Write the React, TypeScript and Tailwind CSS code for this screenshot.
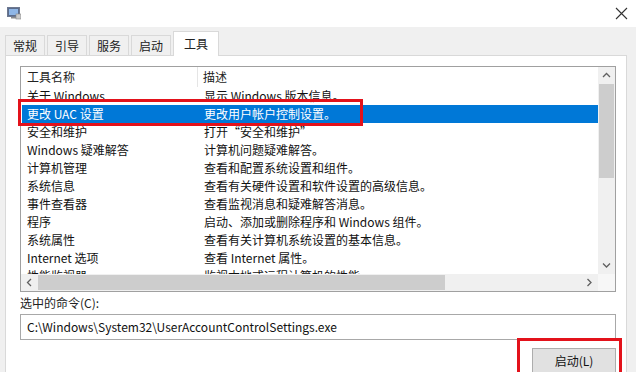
import React from "react";

const rows: [string, string][] = [
  ["关于 Windows", "显示 Windows 版本信息。"],
  ["更改 UAC 设置", "更改用户帐户控制设置。"],
  ["安全和维护", "打开\u201C安全和维护\u201D"],
  ["Windows 疑难解答", "计算机问题疑难解答。"],
  ["计算机管理", "查看和配置系统设置和组件。"],
  ["系统信息", "查看有关硬件设置和软件设置的高级信息。"],
  ["事件查看器", "查看监视消息和疑难解答消息。"],
  ["程序", "启动、添加或删除程序和 Windows 组件。"],
  ["系统属性", "查看有关计算机系统设置的基本信息。"],
  ["Internet 选项", "查看 Internet 属性。"],
  ["性能监视器", "监视本地或远程计算机的性能。"],
];

const Chevron = ({ dir }: { dir: "up" | "down" | "left" | "right" }) => {
  const d =
    dir === "up"
      ? "M1 5 L4.5 1.5 L8 5"
      : dir === "down"
      ? "M1 1.5 L4.5 5 L8 1.5"
      : dir === "left"
      ? "M5 1 L1.5 4.5 L5 8"
      : "M1.5 1 L5 4.5 L1.5 8";
  const w = dir === "up" || dir === "down" ? 9 : 7;
  const h = dir === "up" || dir === "down" ? 7 : 9;
  return (
    <svg width={w} height={h} viewBox={`0 0 ${w} ${h}`}>
      <path d={d} fill="none" stroke="#606060" strokeWidth="1.3" />
    </svg>
  );
};

export default function App() {
  return (
    <div
      className="relative w-[636px] h-[372px] overflow-hidden bg-[#f0f0f0] text-[12px] text-[#111]"
      style={{ fontFamily: '"Noto Sans CJK SC", "Noto Sans", sans-serif' }}
    >
      {/* title bar */}
      <div className="h-[27px] bg-white flex items-center justify-between pl-[7px] pr-[8px]">
        <svg width="14" height="13" viewBox="0 0 14 13">
          <rect x="0.5" y="0.5" width="12" height="9" fill="#5b6c8c" stroke="#6d7890" />
          <rect x="2" y="2" width="9" height="6" fill="#8fb6e6" />
          <rect x="9" y="7" width="5" height="5" fill="#c9c9c9" stroke="#888" strokeWidth="0.6" />
          <rect x="4" y="10" width="5" height="1.5" fill="#8a8a8a" />
        </svg>
        <svg width="13" height="13" viewBox="0 0 13 13">
          <path d="M1 1 L12 12 M12 1 L1 12" stroke="#333" strokeWidth="1.1" />
        </svg>
      </div>

      {/* tabs */}
      <div className="pl-[5px] pr-[9px]">
        <div className="flex items-end h-[28px]">
          {["常规", "引导", "服务", "启动"].map((t) => (
            <div
              key={t}
              className="h-[20px] px-[7px] mr-[2px] flex items-center border-t border-l border-r border-[#d9d9d9] bg-[#f0f0f0] text-[#222]"
            >
              {t}
            </div>
          ))}
          <div className="relative z-10 -mb-px h-[25px] w-[46px] flex items-center justify-center bg-white border-t border-l border-r border-[#d9d9d9] text-[#222]">
            工具
          </div>
        </div>

        {/* panel */}
        <div className="h-[400px] bg-white border border-[#d9d9d9] pl-[14px] pr-[11px] pt-[10px]">
          {/* list view */}
          <div className="w-[596px] h-[226px] border border-[#a0a0a0] flex flex-col">
            <div className="flex h-[207px]">
              <div className="w-[577px] overflow-hidden">
                <div className="flex h-[20px] items-center text-[#222]">
                  <div className="w-[177px] pl-[6px] h-full flex items-center border-r border-[#e5e5e5]">
                    工具名称
                  </div>
                  <div className="pl-[5px]">描述</div>
                </div>
                {rows.map(([a, b], i) => (
                  <div
                    key={a}
                    className={
                      "flex h-[18px] items-center " +
                      (i === 1 ? "bg-[#0078d7] text-white ml-[1px]" : "")
                    }
                  >
                    <div className={i === 1 ? "w-[177px] pl-[5px]" : "w-[178px] pl-[6px]"}>{a}</div>
                    <div className="pl-[5px] whitespace-nowrap">{b}</div>
                  </div>
                ))}
              </div>
              {/* vertical scrollbar */}
              <div className="w-[17px] bg-[#f0f0f0] flex flex-col items-center">
                <div className="h-[17px] flex items-center justify-center">
                  <Chevron dir="up" />
                </div>
                <div className="w-[15px] h-[94px] bg-[#cdcdcd]" />
                <div className="flex-1" />
                <div className="h-[17px] flex items-center justify-center">
                  <Chevron dir="down" />
                </div>
              </div>
            </div>
            {/* horizontal scrollbar */}
            <div className="flex h-[17px]">
              <div className="w-[577px] bg-[#f0f0f0] flex items-center">
                <div className="w-[17px] flex items-center justify-center">
                  <Chevron dir="left" />
                </div>
                <div className="w-[407px] h-[15px] bg-[#cdcdcd]" />
                <div className="flex-1" />
                <div className="w-[17px] flex items-center justify-center">
                  <Chevron dir="right" />
                </div>
              </div>
              <div className="w-[17px] bg-[#f7f7f7]" />
            </div>
          </div>

          <div className="mt-[2px] h-[17px] flex items-center text-[#222]">选中的命令(C):</div>
          <div className="mt-[3px] w-[596px] h-[26px] border border-[#a8a8a8] flex items-center pl-[6px] text-[#111]">
            C:\Windows\System32\UserAccountControlSettings.exe
          </div>
          <div className="flex justify-end w-[596px] mt-[8px]">
            <div className="w-[84px] h-[25px] bg-[#e1e1e1] border border-[#adadad] flex items-center justify-center text-[#111]">
              启动(L)
            </div>
          </div>
        </div>
      </div>

      {/* red highlight boxes */}
      <div className="absolute left-[18px] top-[99px] w-[345px] h-[27px] border-[3px] border-[#e3121b]" />
      <div className="absolute left-[517px] top-[338px] w-[105px] h-[40px] border-[3px] border-[#e3121b]" />
    </div>
  );
}
